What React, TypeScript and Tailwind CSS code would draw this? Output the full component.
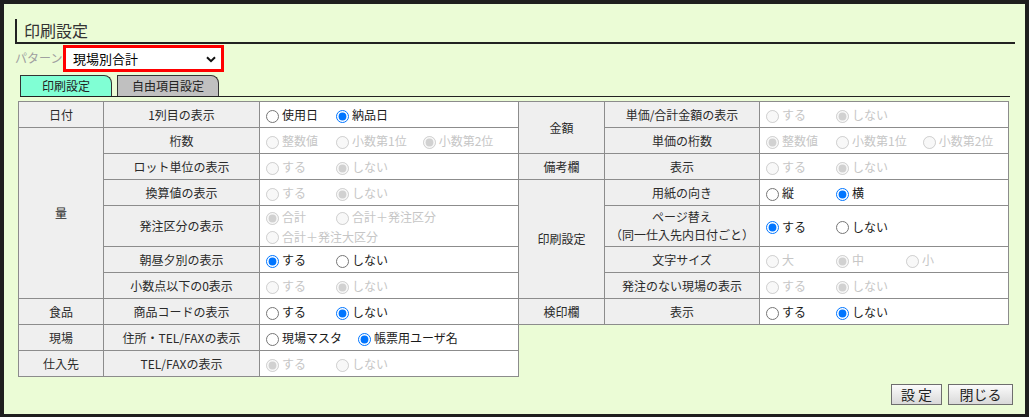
import clsx from "clsx";

type Opt = { label: string; checked?: boolean; disabled?: boolean };
type Row = {
  group?: string;
  span?: number;
  item: React.ReactNode;
  opts: Opt[];
  tall?: boolean;
};

const d = (label: string, checked = false): Opt => ({ label, checked, disabled: true });
const e = (label: string, checked = false): Opt => ({ label, checked });

const leftRows: Row[] = [
  { group: "日付", item: "1列目の表示", opts: [e("使用日"), e("納品日", true)] },
  { group: "量", span: 6, item: "桁数", opts: [d("整数値"), d("小数第1位"), d("小数第2位", true)] },
  { item: "ロット単位の表示", opts: [d("する"), d("しない", true)] },
  { item: "換算値の表示", opts: [d("する"), d("しない", true)] },
  { item: "発注区分の表示", opts: [d("合計", true), d("合計＋発注区分"), d("合計＋発注大区分")], tall: true },
  { item: "朝昼夕別の表示", opts: [e("する", true), e("しない")] },
  { item: "小数点以下の0表示", opts: [d("する"), d("しない", true)] },
  { group: "食品", item: "商品コードの表示", opts: [e("する"), e("しない", true)] },
  { group: "現場", item: "住所・TEL/FAXの表示", opts: [e("現場マスタ"), e("帳票用ユーザ名", true)] },
  { group: "仕入先", item: "TEL/FAXの表示", opts: [d("する", true), d("しない")] },
];

const rightRows: Row[] = [
  { group: "金額", span: 2, item: "単価/合計金額の表示", opts: [d("する"), d("しない", true)] },
  { item: "単価の桁数", opts: [d("整数値", true), d("小数第1位"), d("小数第2位")] },
  { group: "備考欄", item: "表示", opts: [d("する"), d("しない", true)] },
  { group: "印刷設定", span: 4, item: "用紙の向き", opts: [e("縦"), e("横", true)] },
  {
    item: (
      <>
        ページ替え
        <br />
        （同一仕入先内日付ごと）
      </>
    ),
    opts: [e("する", true), e("しない")],
    tall: true,
  },
  { item: "文字サイズ", opts: [d("大"), d("中", true), d("小")] },
  { item: "発注のない現場の表示", opts: [d("する"), d("しない", true)] },
  { group: "検印欄", item: "表示", opts: [e("する"), e("しない", true)] },
];

const th = "border border-[#8c8c8c] bg-[#efefef] text-center text-[#2a2a2a] font-normal px-[2px]";

const SettingTable = ({ rows, cols, name, className }: { rows: Row[]; cols: number[]; name: string; className?: string }) => (
  <table className={clsx("table-fixed border-collapse bg-white text-[12px] leading-[18px]", className)}>
    <colgroup>
      {cols.map((w, i) => (
        <col key={i} style={{ width: w }} />
      ))}
    </colgroup>
    <tbody>
      {rows.map((r, i) => (
        <tr key={i} className={r.tall ? "h-[41px]" : "h-[26px]"}>
          {r.group ? (
            <th rowSpan={r.span ?? 1} className={th}>
              {r.group}
            </th>
          ) : null}
          <th className={th}>{r.item}</th>
          <td className="border border-[#8c8c8c] px-[1px] align-middle">
            {r.opts.map((o) => (
              <label
                key={o.label}
                className={clsx(
                  "inline-flex items-center min-w-[59px] mr-[11px] align-middle whitespace-nowrap",
                  o.disabled ? "text-[#c6c6c6]" : "text-[#1a1a1a]"
                )}
              >
                <input
                  type="radio"
                  name={`${name}-${i}`}
                  defaultChecked={o.checked}
                  disabled={o.disabled}
                  className="ml-[5px] mr-[3px] w-[13px] h-[13px] mt-[2px]"
                />
                {o.label}
              </label>
            ))}
          </td>
        </tr>
      ))}
    </tbody>
  </table>
);

export default function App() {
  return (
    <div className="w-[1029px] h-[417px] overflow-hidden border-[4px] border-b-[3px] border-[#1e1e1e] bg-[#ebfcd6] font-['Noto_Sans_CJK_JP','Liberation_Sans',sans-serif]">
      {/* Title */}
      <div className="mt-[15px] ml-[11px] mr-[10px] h-[25px] border-l-2 border-b-2 border-[#222] pl-[7px] text-[16px] leading-[23px] text-[#333]">
        印刷設定
      </div>

      {/* Pattern */}
      <div className="ml-[11px] flex items-center h-[28px]">
        <span className="w-[48px] text-[12px] text-[#a0a0a0]">パターン</span>
        <div className="relative flex w-[161px] h-[27px] border-[3px] border-[#ff0000] bg-white">
          <select className="block w-full h-[21px] appearance-none bg-white pl-[7px] text-[13px] leading-[21px] text-black outline-none">
            <option>現場別合計</option>
          </select>
          <svg className="absolute right-[5px] top-[8px] pointer-events-none" width="10" height="7" viewBox="0 0 10 7">
            <path d="M1 1.2 L5 5.2 L9 1.2" fill="none" stroke="#111" strokeWidth="2" />
          </svg>
        </div>
      </div>

      {/* Tabs */}
      <div className="mt-[3px] ml-[16px] mr-[15px] flex items-end gap-[5px] h-[22px] border-b border-[#222]">
        <div className="w-[92px] h-[21px] border border-b-0 border-[#333] rounded-tr-[8px] bg-[#80ffd4] text-center text-[12px] leading-[20px] text-[#222]">
          印刷設定
        </div>
        <div className="w-[102px] h-[21px] border border-b-0 border-[#333] rounded-tr-[8px] bg-[#c0c0c0] text-center text-[12px] leading-[20px] text-[#222]">
          自由項目設定
        </div>
      </div>

      {/* Tables */}
      <div className="mt-[4px] ml-[14px] flex items-start">
        <SettingTable rows={leftRows} cols={[85, 156, 259]} name="l" className="w-[500px]" />
        <SettingTable rows={rightRows} cols={[86, 155, 249]} name="r" className="w-[490px] -ml-px" />
      </div>

      {/* Buttons */}
      <div className="mt-[7px] mr-[12px] flex justify-end gap-[6px]">
        <button className="w-[51px] h-[21px] border border-[#6e6e6e] bg-linear-to-b from-[#fbfbfb] to-[#d9d9d9] text-[14px] leading-[19px] text-[#222]">
          設 定
        </button>
        <button className="w-[65px] h-[21px] border border-[#6e6e6e] bg-linear-to-b from-[#fbfbfb] to-[#d9d9d9] text-[14px] leading-[19px] text-[#222]">
          閉じる
        </button>
      </div>
    </div>
  );
}
